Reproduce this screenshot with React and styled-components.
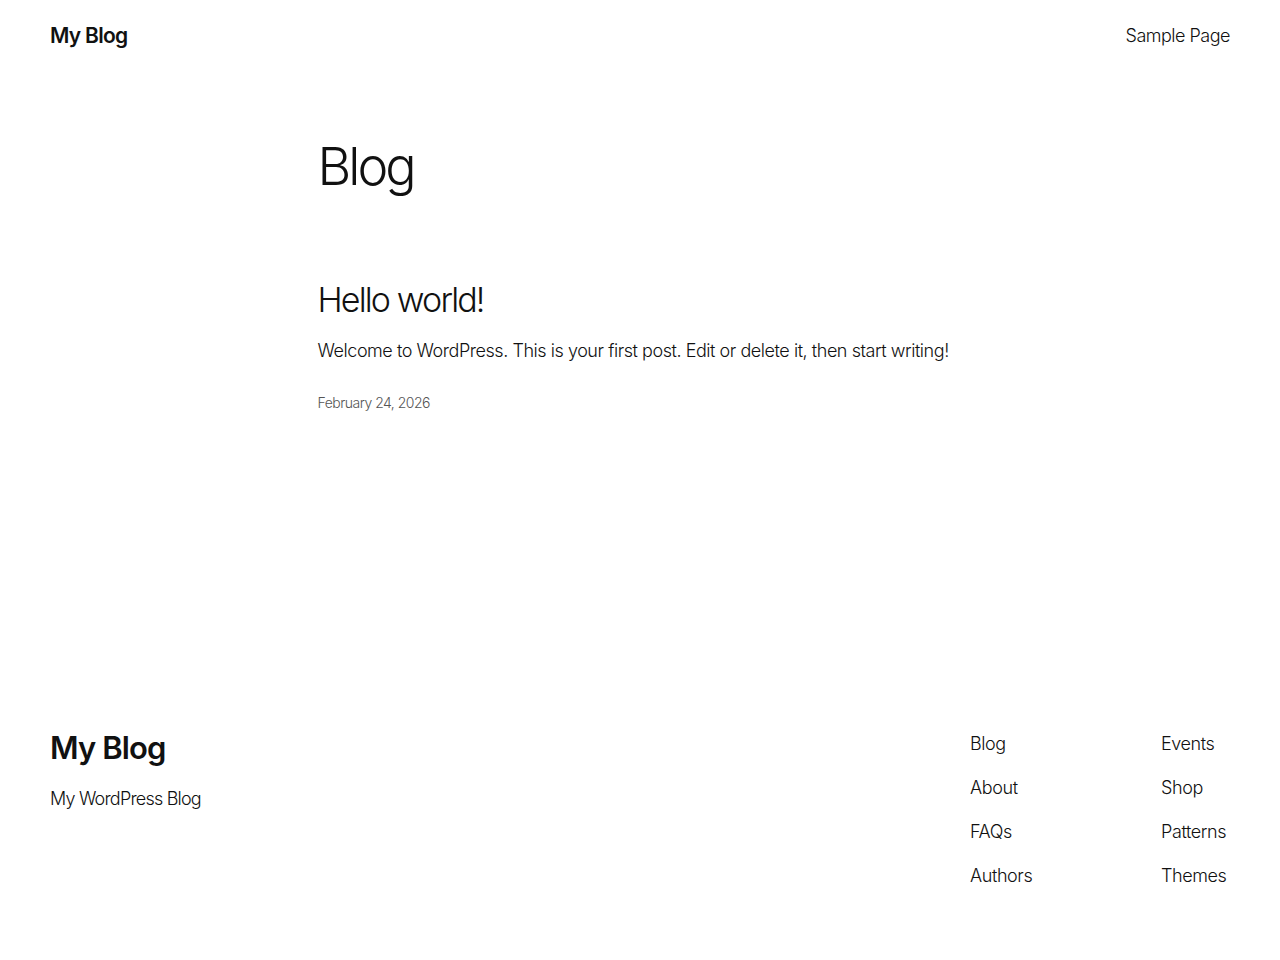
import styled, { createGlobalStyle } from "styled-components";

const GlobalStyle = createGlobalStyle`
  * { box-sizing: border-box; }
  body {
    margin: 0;
    background: #fff;
    color: #111;
    font-family: Inter, "Noto Sans", sans-serif;
    font-weight: 300;
    -webkit-font-smoothing: antialiased;
  }
  a { color: inherit; text-decoration: none; }
`;

const footerLinks = [
  ["Blog", "About", "FAQs", "Authors"],
  ["Events", "Shop", "Patterns", "Themes"],
];

const App = () => (
  <Page>
    <GlobalStyle />
    <Header>
      <SiteTitle href="#">My Blog</SiteTitle>
      <NavLink href="#">Sample Page</NavLink>
    </Header>
    <Main>
      <PageTitle>Blog</PageTitle>
      <Post>
        <PostTitle>Hello world!</PostTitle>
        <Excerpt>
          Welcome to WordPress. This is your first post. Edit or delete it,
          then start writing!
        </Excerpt>
        <PostDate>February 24, 2026</PostDate>
      </Post>
    </Main>
    <Footer>
      <Brand>
        <FooterTitle href="#">My Blog</FooterTitle>
        <Tagline>My WordPress Blog</Tagline>
      </Brand>
      <FooterNav>
        {footerLinks.map((col, i) => (
          <FooterColumn key={i}>
            {col.map((label) => (
              <FooterLink key={label} href="#">
                {label}
              </FooterLink>
            ))}
          </FooterColumn>
        ))}
      </FooterNav>
    </Footer>
  </Page>
);

const Page = styled.div`
  min-height: 960px;
  display: flex;
  flex-direction: column;
`;
const Header = styled.header`
  height: 70px;
  padding: 0 50px;
  display: flex;
  align-items: center;
  justify-content: space-between;
`;
const SiteTitle = styled.a`
  font-size: 21px;
  font-weight: 600;
  letter-spacing: -0.7px;
`;
const NavLink = styled.a`
  font-size: 18px;
  letter-spacing: -0.5px;
`;
const Main = styled.main`
  width: 645px;
  margin: 0 auto;
  flex: 1;
`;
const PageTitle = styled.h1`
  margin: 66px 0 0;
  font-size: 52px;
  line-height: 62px;
  font-weight: 300;
  letter-spacing: -3px;
`;
const Post = styled.article`
  margin-top: 82px;
`;
const PostTitle = styled.h2`
  margin: 0;
  font-size: 34px;
  line-height: 40px;
  font-weight: 300;
  letter-spacing: -1.85px;
`;
const Excerpt = styled.p`
  margin: 17px 0 0;
  font-size: 18px;
  line-height: 28px;
  letter-spacing: -0.45px;
`;
const PostDate = styled.div`
  margin-top: 28px;
  font-size: 14px;
  line-height: 20px;
  color: #555;
  letter-spacing: -0.5px;
`;
const Footer = styled.footer`
  padding: 0 50px 70px;
  display: flex;
  justify-content: space-between;
  align-items: flex-start;
`;
const Brand = styled.div`
  display: flex;
  flex-direction: column;
`;
const FooterTitle = styled.a`
  font-size: 31px;
  line-height: 36px;
  font-weight: 600;
  letter-spacing: -0.9px;
`;
const Tagline = styled.p`
  margin: 19px 0 0;
  font-size: 18px;
  line-height: 28px;
  letter-spacing: -0.8px;
`;
const FooterNav = styled.nav`
  display: grid;
  grid-template-columns: 191px 69px;
`;
const FooterColumn = styled.div`
  display: flex;
  flex-direction: column;
  gap: 16px;
`;
const FooterLink = styled.a`
  font-size: 18px;
  line-height: 28px;
  letter-spacing: -0.4px;
  white-space: nowrap;
`;

export default App;
